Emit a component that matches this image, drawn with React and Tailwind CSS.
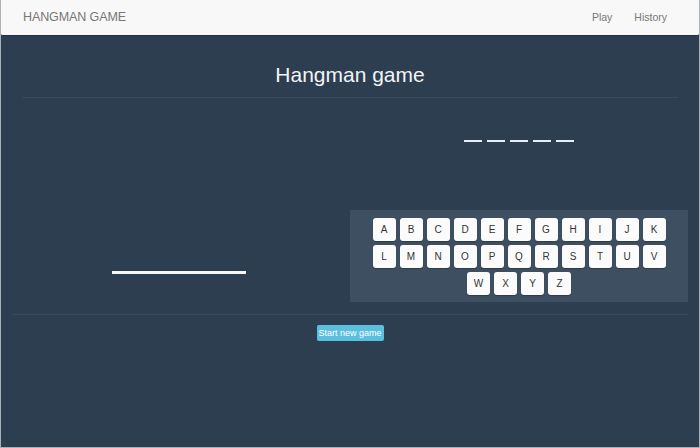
import React from 'react'

const ROWS = [
  ['A', 'B', 'C', 'D', 'E', 'F', 'G', 'H', 'I', 'J', 'K'],
  ['L', 'M', 'N', 'O', 'P', 'Q', 'R', 'S', 'T', 'U', 'V'],
  ['W', 'X', 'Y', 'Z'],
]

const WORD_LENGTH = 5

function Navbar() {
  return (
    <nav className="h-[36px] flex items-center justify-between bg-[#f8f8f8] border-b border-[#22313f] pl-[22px] pr-[32px] rounded-b-[2px]">
      <span className="text-[12.5px] text-[#777] tracking-[-0.1px]">HANGMAN GAME</span>
      <div className="flex items-center gap-[22px] text-[10.5px] text-[#777]">
        <a href="#">Play</a>
        <a href="#">History</a>
      </div>
    </nav>
  )
}

function Keyboard() {
  return (
    <div className="mt-[68px] h-[92px] bg-[#3d4f61] pt-[8px] flex flex-col items-center gap-[4px]">
      {ROWS.map((row, i) => (
        <div key={i} className="flex gap-[4px]">
          {row.map(letter => (
            <button
              key={letter}
              className="w-[23px] h-[23px] rounded-[3px] bg-[#fbfbfb] text-[10px] text-[#333] flex items-center justify-center shadow-[0_1px_1px_rgba(0,0,0,0.25)]"
            >
              {letter}
            </button>
          ))}
        </div>
      ))}
    </div>
  )
}

export default function App() {
  return (
    <div
      className="w-[700px] h-[448px] bg-[#2d3e50] border-x border-b border-[#aab1b8] flex flex-col"
      style={{ fontFamily: '"Liberation Sans", Arial, sans-serif' }}
    >
      <Navbar />

      <div className="px-[11px]">
        {/* Title */}
        <div className="mx-[10px]">
          <h1 className="mt-[27px] text-center text-[21px] leading-[23px] text-[#f2f4f6]">Hangman game</h1>
          <div className="mt-[11px] h-px bg-[#394a5c]" />
        </div>

        {/* Board */}
        <div className="flex">
          <div className="flex-1">
            <div className="mt-[173px] ml-[100px] w-[134px] h-[3px] bg-[#f7f7f7]" />
          </div>
          <div className="flex-1 flex flex-col">
            <div className="mt-[42px] flex justify-center gap-[5px]">
              {Array.from({ length: WORD_LENGTH }).map((_, i) => (
                <span key={i} className="w-[18px] h-[2px] bg-[#e9eef4]" />
              ))}
            </div>
            <Keyboard />
          </div>
        </div>

        <div className="mt-[12px] h-px bg-[#394a5c]" />

        <div className="mt-[10px] flex justify-center">
          <button className="w-[67px] h-[16px] rounded-[2px] bg-[#5bc0de] text-white text-[9px] leading-none flex items-center justify-center">
            Start new game
          </button>
        </div>
      </div>
    </div>
  )
}
